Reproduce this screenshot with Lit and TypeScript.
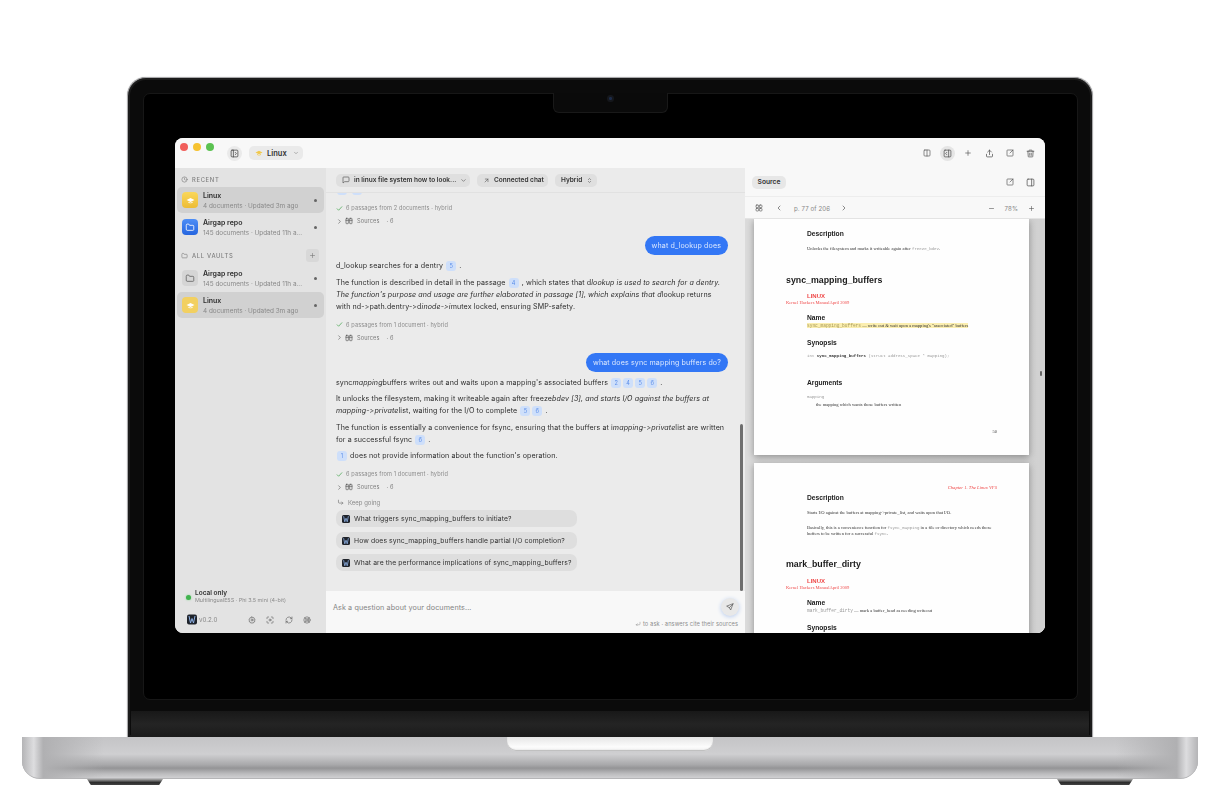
import { LitElement, html, css, svg } from "lit";
import { customElement } from "lit/decorators.js";

const P: Record<string, unknown> = {
  clock: svg`<circle cx="12" cy="12" r="9"/><path d="M12 7v5l3 2"/>`,
  folder: svg`<path d="M3 7a2 2 0 0 1 2-2h4l2 3h8a2 2 0 0 1 2 2v8a2 2 0 0 1-2 2H5a2 2 0 0 1-2-2z"/>`,
  plus: svg`<path d="M12 5v14M5 12h14"/>`,
  minus: svg`<path d="M5 12h14"/>`,
  down: svg`<path d="m6 9 6 6 6-6"/>`,
  updown: svg`<path d="m8 9 4-4 4 4M8 15l4 4 4-4"/>`,
  upright: svg`<path d="M7 17 17 7M8 7h9v9"/>`,
  msg: svg`<path d="M21 15a2 2 0 0 1-2 2H8l-5 4V5a2 2 0 0 1 2-2h14a2 2 0 0 1 2 2z"/>`,
  check: svg`<path d="m4 13 5 5L20 6"/>`,
  right: svg`<path d="m9 6 6 6-6 6"/>`,
  left: svg`<path d="m15 6-6 6 6 6"/>`,
  book: svg`<rect x="3" y="4" width="7" height="16" rx="1.5"/><rect x="14" y="4" width="7" height="16" rx="1.5"/><path d="M3 10h7M14 10h7"/>`,
  panelL: svg`<rect x="3" y="3" width="18" height="18" rx="2.5"/><path d="M9 3v18M14 9l3 3-3 3"/>`,
  split: svg`<rect x="3" y="3" width="18" height="18" rx="2.5"/><path d="M12 3v18"/>`,
  panelR: svg`<rect x="3" y="3" width="18" height="18" rx="2.5"/><path d="M15 3v18"/>`,
  panelRA: svg`<rect x="3" y="3" width="18" height="18" rx="2.5"/><path d="M15 3v18M10 9l-3 3 3 3"/>`,
  share: svg`<path d="M12 15V3M7 8l5-5 5 5M4 14v5a2 2 0 0 0 2 2h12a2 2 0 0 0 2-2v-5"/>`,
  ext: svg`<path d="M12 3H5a2 2 0 0 0-2 2v14a2 2 0 0 0 2 2h14a2 2 0 0 0 2-2v-7M14 3h7v7M21 3l-9 9"/>`,
  trash: svg`<path d="M3 6h18M8 6V4a1 1 0 0 1 1-1h6a1 1 0 0 1 1 1v2M5 6l1 14a1 1 0 0 0 1 1h10a1 1 0 0 0 1-1l1-14M10 11v6M14 11v6"/>`,
  grid: svg`<rect x="3" y="3" width="8" height="8" rx="2.5"/><rect x="13" y="3" width="8" height="8" rx="2.5"/><rect x="3" y="13" width="8" height="8" rx="2.5"/><rect x="13" y="13" width="8" height="8" rx="2.5"/>`,
  send: svg`<path d="M21 3 10 14M21 3l-7 18-4-7-7-4z"/>`,
  turn: svg`<path d="M5 4v7a3 3 0 0 0 3 3h12M16 10l4 4-4 4"/>`,
  enter: svg`<path d="M20 5v7a3 3 0 0 1-3 3H5M9 11l-4 4 4 4"/>`,
  gear: svg`<circle cx="12" cy="12" r="3"/><path d="M12 2.500l2 2.700 3.300-.5.8 3.200 3 1.600-1.300 3 1.300 3-3 1.600-.8 3.200-3.300-.5-2 2.700-2-2.700-3.300.5-.8-3.200-3-1.600 1.300-3-1.300-3 3-1.600.8-3.200 3.300.5z"/>`,
  scan: svg`<path d="M3 8V5a2 2 0 0 1 2-2h3M16 3h3a2 2 0 0 1 2 2v3M21 16v3a2 2 0 0 1-2 2h-3M8 21H5a2 2 0 0 1-2-2v-3"/><circle cx="12" cy="12" r="3"/>`,
  sync: svg`<path d="M21 12a9 9 0 0 1-15 6.700L3 16M3 12a9 9 0 0 1 15-6.700L21 8M21 3v5h-5M3 21v-5h5"/>`,
  buoy: svg`<circle cx="12" cy="12" r="9.500"/><circle cx="12" cy="12" r="4"/><path d="m5.500 5.500 3.600 3.600M14.900 14.900l3.600 3.600M18.500 5.500l-3.600 3.600M9.100 14.900l-3.600 3.600"/>`,
};

const ic = (n: string, cls = "i8") =>
  html`<svg class="ic ${cls}" viewBox="0 0 24 24">${P[n]}</svg>`;

const cap = (cls: string) => html`<svg class="cap ${cls}" viewBox="0 0 24 24"><path d="M12 5 1.500 10.500 12 16l10.500-5.500z"/><path d="M6 15v2.500c2 2.500 10 2.500 12 0V15l-6 3z"/></svg>`;

const logo = (cls: string) => html`<svg class=${cls} viewBox="0 0 20 20"><rect width="20" height="20" rx="4" fill="#20242c"/><path d="M4 3 7 17 10 8l3 9 3-14" fill="none" stroke="#8fb2e6" stroke-width="2"/></svg>`;

const cite = (n: number) => html`<span class="cite">${n}</span>`;

const meta = (t: string) => html`<div class="meta">${ic("check", "i8 green")}<span>${t}</span></div>
  <div class="sources">${ic("right", "i7 dark")}${ic("book", "i8 dark")}<span>Sources</span><span class="sdot">· 6</span></div>`;

interface Vault { name: string; sub: string; kind: string; on?: boolean }
const recent: Vault[] = [
  { name: "Linux", sub: "4 documents · Updated 3m ago", kind: "yellow", on: true },
  { name: "Airgap repo", sub: "145 documents · Updated 11h a...", kind: "blue" },
];
const vaults: Vault[] = [
  { name: "Airgap repo", sub: "145 documents · Updated 11h a...", kind: "gray" },
  { name: "Linux", sub: "4 documents · Updated 3m ago", kind: "soft", on: true },
];

const row = (v: Vault) => html`<div class="row ${v.on ? "on" : ""}">
  <div class="tile ${v.kind}">${v.kind === "yellow" || v.kind === "soft" ? cap("white") : ic("folder", "i10")}</div>
  <div class="rowtext"><div class="rname">${v.name}</div><div class="rsub">${v.sub}</div></div>
  <span class="rdot"></span>
</div>`;

@customElement("app-root")
export class AppRoot extends LitElement {
  static styles = css`
    :host { display: block; width: 1220px; height: 793px; background: #fff; overflow: hidden; font-family: Inter, "Liberation Sans", sans-serif; color: #2b2b2b; }
    .laptop { display: flex; flex-direction: column; align-items: center; padding-top: 77px; }
    .lid { width: 966px; height: 660px; box-sizing: border-box; background: #0b0b0b; border: 1px solid #a9a9ab; border-bottom: 0; border-radius: 19px 19px 0 0; display: flex; flex-direction: column; position: relative; box-shadow: inset 0 0 0 2px #1b1b1b, 0 0 1px #999; }
    .screen { height: 633px; box-sizing: border-box; padding: 60px 47px 0; flex: none; margin: 0; position: relative; }
    .screenline { position: absolute; left: 15px; right: 14px; top: 15px; height: 607px; border: 1px solid #171717; border-radius: 7px; box-sizing: border-box; background: #000; }
    .notch { position: absolute; left: 425px; top: 15px; width: 115px; height: 20px; box-sizing: border-box; background: #0a0a0a; border: 1px solid #191919; border-top: 0; border-radius: 0 0 6px 6px; display: flex; justify-content: center; padding-top: 2px; }
    .cam { width: 7px; height: 7px; border-radius: 50%; background: radial-gradient(circle, #1c2b4a 0 25%, #15171c 35%); }
    .band { flex: 1; background: linear-gradient(#181818, #242424 50%, #1b1b1b); margin: 0 3px; }
    .window { position: relative; width: 870px; height: 495px; border-radius: 8px; overflow: hidden; background: #f8f8f8; display: flex; flex-direction: column; filter: blur(.35px); opacity: .999; will-change: opacity; }

    .base { width: 1176px; height: 42px; position: relative; flex: none; border-radius: 0 0 18px 18px / 0 0 18px 18px; border-bottom: 1px solid #b5b5b7;
      background:
        linear-gradient(90deg, #b4b4b6 0, #dddddf 1%, #b0b0b2 1.800%, rgba(176,176,178,0) 7%, rgba(176,176,178,0) 93%, #b0b0b2 98.200%, #dddddf 99%, #b4b4b6 100%),
        linear-gradient(#c4c4c6 0, #cfcfd1 42%, #a8a8aa 68%, #949496 76%, #bdbdbf 90%, #d0d0d2 100%);
      box-sizing: border-box; display: flex; justify-content: center; }
    .lip { width: 206px; height: 14px; background: linear-gradient(#e6e6e6, #fcfcfc 70%, #f0f0f0); border-radius: 0 0 9px 9px; box-shadow: inset 0 -1px 1px #bbb; }
    .feet { width: 1046px; display: flex; justify-content: space-between; }
    .foot { width: 76px; height: 6px; background: linear-gradient(#aaa, #2a2a2a 60%, #444); clip-path: polygon(0 0, 100% 0, 95% 100%, 5% 100%); }

    .ic { fill: none; stroke: currentColor; stroke-width: 2; stroke-linecap: round; stroke-linejoin: round; flex: none; display: block; }
    .i7 { width: 7px; height: 7px; } .i8 { width: 8px; height: 8px; } .i9 { width: 9px; height: 9px; } .i10 { width: 10px; height: 10px; }
    .green { color: #4eaa57; stroke-width: 2.600; } .dark { color: #555; }

    .titlebar { height: 30px; flex: none; display: flex; align-items: center; background: #f9f9f9; padding-left: 5px; padding-right: 4px; }
    .lights { display: flex; gap: 5px; margin-bottom: 12px; }
    .l { width: 8px; height: 8px; border-radius: 50%; }
    .tog { width: 15px; height: 15px; margin-left: 13px; border-radius: 50%; background: #ebebeb; display: grid; place-items: center; color: #444; }
    .vchip { margin-left: 7px; width: 54px; height: 14px; box-sizing: border-box; border-radius: 5px; background: #ebebeb; display: flex; align-items: center; padding-left: 6px; gap: 4px; font-size: 7.500px; font-weight: 600; color: #333; }
    .vchip .ic { color: #777; margin-left: 2px; width: 6px; height: 6px; }
    .cap { width: 8px; height: 8px; display: block; flex: none; }
    .cap.y { fill: #f2c94c; } .cap.white { fill: #fff; width: 9px; height: 9px; }
    .tright { margin-left: auto; display: flex; gap: 0; }
    .tb { width: 20.800px; height: 15px; display: grid; place-items: center; color: #555; position: relative; }
    .tb.act::before { content: ""; position: absolute; left: 3px; top: 0; width: 15px; height: 15px; border-radius: 50%; background: #e6e6e6; }
    .tb .ic { position: relative; }

    .cols { flex: 1; min-height: 0; display: flex; }
    .side { width: 151px; flex: none; background: #e4e4e4; display: flex; flex-direction: column; padding: 6px 2px 0; box-sizing: border-box; }
    .shead { height: 10px; display: flex; align-items: center; gap: 4px; padding-left: 4px; font-size: 5.800px; letter-spacing: .7px; color: #808080; font-weight: 500; position: relative; }
    .shead .ic { color: #777; width: 7px; height: 7px; }
    .rows { display: flex; flex-direction: column; gap: 1px; margin-top: 3px; }
    .rows.v { margin-top: 5px; }
    .shead.v { margin-top: 10px; }
    .add { position: absolute; right: 5px; top: -1.500px; width: 13px; height: 13px; background: #d9d9d9; border-radius: 3px; display: grid; place-items: center; color: #555; }
    .row { height: 26px; border-radius: 5px; display: flex; align-items: center; padding: 0 7px 0 5px; }
    .row.on { background: #d2d2d2; }
    .tile { width: 16px; height: 16px; border-radius: 4px; display: grid; place-items: center; flex: none; color: #fff; }
    .tile.yellow { background: linear-gradient(#fbd85c, #eebd35); }
    .tile.soft { background: #f3d162; }
    .tile.blue { background: linear-gradient(#4f8ff7, #2666e0); }
    .tile.gray { background: #d6d6d6; color: #666; }
    .rowtext { margin-left: 5px; flex: 1; min-width: 0; padding-top: 1px; }
    .rname { font-size: 7px; line-height: 10px; font-weight: 600; color: #2d2d2d; }
    .rsub { font-size: 6.400px; line-height: 10px; color: #8a8a8a; white-space: nowrap; }
    .rdot { width: 3px; height: 3px; border-radius: 50%; background: #666; flex: none; }
    .foot-s { margin-top: auto; padding: 0 13px 8px 9px; }
    .local { display: flex; align-items: center; gap: 4px; }
    .gdot { width: 5px; height: 5px; border-radius: 50%; background: #41b34f; box-shadow: 0 0 2px #7bd487; flex: none; margin-top: 1px; }
    .ltitle { font-size: 6.500px; line-height: 8px; font-weight: 600; color: #333; }
    .lsub { font-size: 5.400px; line-height: 7px; color: #8e8e8e; white-space: nowrap; }
    .sbot { display: flex; align-items: center; margin-top: 10px; }
    .applogo { width: 10px; height: 11px; display: block; flex: none; margin-left: 1px; }
    .ver { font-size: 6.200px; color: #888; margin-left: 2px; }
    .sicons { margin-left: auto; display: flex; gap: 10.500px; color: #666; }

    .chat { width: 419px; flex: none; background: #ececec; display: flex; flex-direction: column; position: relative; }
    .ctool { height: 25px; flex: none; display: flex; align-items: center; gap: 7px; padding: 0 0 0 10px; border-bottom: 1px solid #e2e2e2; box-sizing: border-box; }
    .chip { height: 13px; border-radius: 5px; background: #e0e0e0; display: flex; align-items: center; font-size: 6.500px; font-weight: 600; color: #333; padding: 0 6px; gap: 4px; white-space: nowrap; box-sizing: border-box; }
    .chip .ic { color: #555; }
    .c1 { width: 134px; } .c2 { width: 71px; } .c3 { width: 42px; }
    .scroll { flex: 1; min-height: 0; overflow: hidden; padding: 0 17px 0 10px; position: relative; }
    .stub { display: flex; gap: 3px; margin-top: -8px; height: 10px; }
    .meta { display: flex; align-items: center; gap: 3px; height: 10px; font-size: 5.600px; color: #8c8c8c; margin-top: 7px; letter-spacing: .12px; }
    .meta .ic { width: 7px; height: 7px; }
    .stub + .meta { margin-top: 8px; }
    .sources { display: flex; align-items: center; gap: 2px; height: 10px; font-size: 5.600px; color: #7e7e7e; margin-top: 3px; letter-spacing: .12px; }
    .sources .i8 { margin-right: 2px; }
    .sdot { margin-left: 5px; }
    .bubble-row { display: flex; justify-content: flex-end; margin-top: 10px; margin-bottom: 5px; }
    .bubble { height: 19px; border-radius: 10px; background: #3478f6; color: #dde9ff; font-size: 7.100px; display: flex; align-items: center; padding: 0 7px; letter-spacing: .12px; box-sizing: border-box; }
    p { margin: 0 0 4.600px; font-size: 7.100px; line-height: 12px; color: #2e2e2e; white-space: nowrap; letter-spacing: .1px; }
    .cite { display: inline-block; min-width: 9px; height: 10px; line-height: 10px; margin: 0 1px; text-align: center; background: #cfe0fb; border-radius: 3px; color: #5e90ea; font-size: 5.600px; font-style: normal; vertical-align: 0; padding: 0 .5px; }
    .keep { display: flex; align-items: center; gap: 4px; height: 10px; font-size: 6px; color: #8a8a8a; margin-top: 5px; padding-left: 1px; }
    .keep .ic { width: 7px; height: 7px; color: #666; }
    .qs { display: flex; flex-direction: column; gap: 5px; width: 241px; margin-top: 3px; }
    .q { height: 17px; border-radius: 7px; background: #dfdfdf; display: flex; align-items: center; padding-left: 6px; gap: 4px; font-size: 6.800px; color: #333; white-space: nowrap; letter-spacing: .1px; }
    .qlogo { width: 8px; height: 8px; flex: none; display: block; }
    .thumb { position: absolute; right: 2px; top: 231px; width: 3px; height: 167px; border-radius: 2px; background: #6f6f6f; }
    .input { height: 42px; flex: none; background: #f9f9f9; position: relative; padding: 10px 6px 0 7px; box-sizing: border-box; display: flex; flex-direction: column; }
    .irow { display: flex; align-items: center; justify-content: space-between; height: 12px; }
    .ph { font-size: 7.200px; color: #858585; letter-spacing: .1px; }
    .sendb { width: 18px; height: 18px; border-radius: 50%; background: #e9e9e9; box-shadow: 0 1px 4px #b9cdf0; display: grid; place-items: center; color: #555; }
    .hint { margin-top: 7px; margin-right: 1px; display: flex; align-items: center; justify-content: flex-end; gap: 1.500px; font-size: 5.700px; color: #8f8f8f; letter-spacing: .1px; }
    .hint .ic { width: 6px; height: 6px; }

    .src { flex: 1; min-width: 0; background: #f9f9f9; display: flex; flex-direction: column; position: relative; }
    .shead2 { height: 29px; flex: none; border-bottom: 1px solid #eeeeee; display: flex; align-items: center; box-sizing: border-box; padding: 0 4px 0 7px; }
    .schip { height: 13px; width: 34px; border-radius: 5px; background: #e8e8e8; font-size: 6.700px; font-weight: 600; color: #333; display: grid; place-items: center; }
    .sright { margin-left: auto; display: flex; }
    .pbar { height: 22px; flex: none; border-bottom: 1px solid #e4e4e4; display: flex; align-items: center; box-sizing: border-box; padding: 1px 10px 0; font-size: 6.100px; color: #888; letter-spacing: .1px; }
    .pbar .ic { color: #555; }
    .gap12 { width: 12px; flex: none; }
    .pg { margin: 0 10px 0 11px; }
    .pct { margin: 0 10px; }
    .sp { flex: 1; }
    .pdf { flex: 1; min-height: 0; overflow: hidden; background: linear-gradient(90deg, #dcdcdc, #d2d2d2); display: flex; flex-direction: column; gap: 8px; padding-left: 9px; position: relative; }
    .page { width: 275px; flex: none; background: #fff; box-shadow: 0 2px 7px rgba(0,0,0,.35); box-sizing: border-box; padding: 10px 32px 20px; font-family: "Liberation Serif", serif; color: #222; }
    .page.second { padding-top: 22px; }
    .h3 { font: 700 6.700px/10px "Liberation Sans", sans-serif; color: #222; margin-left: 21px; }
    .h2 { font: 700 8.800px/12px "Liberation Sans", sans-serif; color: #1c1c1c; }
    .t { font-size: 4.550px; line-height: 6px; margin-left: 21px; white-space: nowrap; color: #333; }
    .m { font-family: "Liberation Mono", monospace; color: #999; font-size: 4.100px; }
    .m.n { font-size: 4.500px; }
    .m.b { color: #333; font-weight: 700; }
    .red { font: 700 6px/7px "Liberation Sans", sans-serif; color: #f04a4a; margin-left: 21px; }
    .red2 { font-size: 4.550px; line-height: 6px; color: #f04a4a; }
    .mark { background: #fcefb0; }
    .mark .m { color: #a89a5a; }
    .num { font-size: 4.500px; line-height: 6px; text-align: right; color: #444; }
    .chap { font-size: 4.700px; line-height: 6px; text-align: right; font-style: italic; color: #f04a4a; }
    .mt2 { margin-top: 2px; } .mt5 { margin-top: 5px; } .mt6 { margin-top: 6px; } .mt7 { margin-top: 7px; } .mt8 { margin-top: 8px; } .mt9 { margin-top: 9px; }
    .mt19 { margin-top: 19px; } .mt21 { margin-top: 21px; } .mt22 { margin-top: 22px; }
    .ind { margin-left: 30px; }
    .grip { position: absolute; right: 3px; top: 152px; width: 2px; height: 5px; border-radius: 1px; background: #666; }
  `;

  render() {
    return html`<div class="laptop">
      <div class="lid">
        <div class="screenline"></div>
        <div class="notch"><span class="cam"></span></div>
        <div class="screen">${this.appWindow()}</div>
        <div class="band"></div>
      </div>
      <div class="base"><div class="lip"></div></div>
      <div class="feet"><span class="foot"></span><span class="foot"></span></div>
    </div>`;
  }

  appWindow() {
    return html`<div class="window">
      <div class="titlebar">
        <div class="lights">
          <span class="l" style="background:#f2605c"></span><span class="l" style="background:#f7c331"></span><span class="l" style="background:#5cc352"></span>
        </div>
        <div class="tog">${ic("panelL", "i9")}</div>
        <div class="vchip">${cap("y")}<span>Linux</span>${ic("down")}</div>
        <div class="tright">
          <div class="tb">${ic("split")}</div>
          <div class="tb act">${ic("panelRA", "i9")}</div>
          <div class="tb">${ic("plus")}</div>
          <div class="tb">${ic("share", "i9")}</div>
          <div class="tb">${ic("ext")}</div>
          <div class="tb">${ic("trash", "i9")}</div>
        </div>
      </div>
      <div class="cols">
        ${this.sidebar()}
        ${this.chat()}
        ${this.source()}
      </div>
    </div>`;
  }

  sidebar() {
    return html`<aside class="side">
      <div class="shead">${ic("clock")}RECENT</div>
      <div class="rows">${recent.map(row)}</div>
      <div class="shead v">${ic("folder")}ALL VAULTS<span class="add">${ic("plus", "i8")}</span></div>
      <div class="rows v">${vaults.map(row)}</div>
      <div class="foot-s">
        <div class="local"><span class="gdot"></span><div><div class="ltitle">Local only</div><div class="lsub">MultilingualE5S · Phi 3.5 mini (4-bit)</div></div></div>
        <div class="sbot">
          ${logo("applogo")}<span class="ver">v0.2.0</span>
          <div class="sicons">${ic("gear")}${ic("scan")}${ic("sync")}${ic("buoy")}</div>
        </div>
      </div>
    </aside>`;
  }

  chat() {
    const qs = [
      "What triggers sync_mapping_buffers to initiate?",
      "How does sync_mapping_buffers handle partial I/O completion?",
      "What are the performance implications of sync_mapping_buffers?",
    ];
    return html`<main class="chat">
      <div class="ctool">
        <div class="chip c1">${ic("msg")}<span>in linux file system how to look...</span>${ic("down", "i7")}</div>
        <div class="chip c2">${ic("upright", "i7")}<span>Connected chat</span></div>
        <div class="chip c3"><span>Hybrid</span>${ic("updown", "i7")}</div>
      </div>
      <div class="scroll">
        <div class="stub"><span class="cite"></span><span class="cite"></span></div>
        ${meta("6 passages from 2 documents · hybrid")}
        <div class="bubble-row"><div class="bubble">what d_lookup does</div></div>
        <p>d_lookup searches for a dentry ${cite(5)} .</p>
        <p>The function is described in detail in the passage ${cite(4)} , which states that d<i>lookup is used to search for a dentry.<br>The function's purpose and usage are further elaborated in passage [1], which explains that d</i>lookup returns<br>with nd-&gt;path.dentry-&gt;d<i>inode-&gt;i</i>mutex locked, ensuring SMP-safety.</p>
        ${meta("6 passages from 1 document · hybrid")}
        <div class="bubble-row"><div class="bubble">what does sync mapping buffers do?</div></div>
        <p>sync<i>mapping</i>buffers writes out and waits upon a mapping's associated buffers ${cite(2)}${cite(4)}${cite(5)}${cite(6)} .</p>
        <p>It unlocks the filesystem, making it writeable again after freeze<i>bdev [3], and starts I/O against the buffers at<br>mapping-&gt;private</i>list, waiting for the I/O to complete ${cite(5)}${cite(6)} .</p>
        <p>The function is essentially a convenience for fsync, ensuring that the buffers at i<i>mapping-&gt;private</i>list are written<br>for a successful fsync ${cite(6)} .</p>
        <p>${cite(1)} does not provide information about the function's operation.</p>
        ${meta("6 passages from 1 document · hybrid")}
        <div class="keep">${ic("turn")}Keep going</div>
        <div class="qs">${qs.map((q) => html`<div class="q">${logo("qlogo")}<span>${q}</span></div>`)}</div>
        <div class="thumb"></div>
      </div>
      <div class="input">
        <div class="irow"><span class="ph">Ask a question about your documents...</span><div class="sendb">${ic("send", "i8")}</div></div>
        <div class="hint">${ic("enter")}<span>to ask · answers cite their sources</span></div>
      </div>
    </main>`;
  }

  source() {
    return html`<section class="src">
      <div class="shead2">
        <div class="schip">Source</div>
        <div class="sright"><div class="tb">${ic("ext")}</div><div class="tb">${ic("panelR", "i9")}</div></div>
      </div>
      <div class="pbar">
        ${ic("grid")}<span class="gap12"></span>${ic("left")}<span class="pg">p. 77 of 206</span>${ic("right")}
        <span class="sp"></span>
        ${ic("minus", "i7")}<span class="pct">78%</span>${ic("plus", "i7")}
      </div>
      <div class="pdf">
        <div class="page">
          <div class="h3">Description</div>
          <div class="t mt7">Unlocks the filesystem and marks it writeable again after <span class="m">freeze_bdev</span>.</div>
          <div class="h2 mt22">sync_mapping_buffers</div>
          <div class="red mt7">LINUX</div>
          <div class="red2">Kernel Hackers ManualApril 2009</div>
          <div class="h3 mt7">Name</div>
          <div class="t"><span class="mark"><span class="m n">sync_mapping_buffers</span> — write out &amp; wait upon a mapping's "associated" buffers</span></div>
          <div class="h3 mt9">Synopsis</div>
          <div class="t mt5"><span class="m">int </span><span class="m b">sync_mapping_buffers</span><span class="m"> (struct address_space * mapping);</span></div>
          <div class="h3 mt19">Arguments</div>
          <div class="t mt6"><span class="m">mapping</span></div>
          <div class="t ind mt2">the mapping which wants those buffers written</div>
          <div class="num mt21">50</div>
        </div>
        <div class="page second">
          <div class="chap">Chapter 1. The Linux VFS</div>
          <div class="h3 mt2">Description</div>
          <div class="t mt7">Starts I/O against the buffers at mapping-&gt;private_list, and waits upon that I/O.</div>
          <div class="t mt9">Basically, this is a convenience function for <span class="m">fsync_mapping</span> in a file or directory which needs those<br>buffers to be written for a successful <span class="m">fsync</span>.</div>
          <div class="h2 mt21">mark_buffer_dirty</div>
          <div class="red mt8">LINUX</div>
          <div class="red2">Kernel Hackers ManualApril 2009</div>
          <div class="h3 mt7">Name</div>
          <div class="t"><span class="m n">mark_buffer_dirty</span> — mark a buffer_head as needing writeout</div>
          <div class="h3 mt9">Synopsis</div>
        </div>
        <div class="grip"></div>
      </div>
    </section>`;
  }
}
